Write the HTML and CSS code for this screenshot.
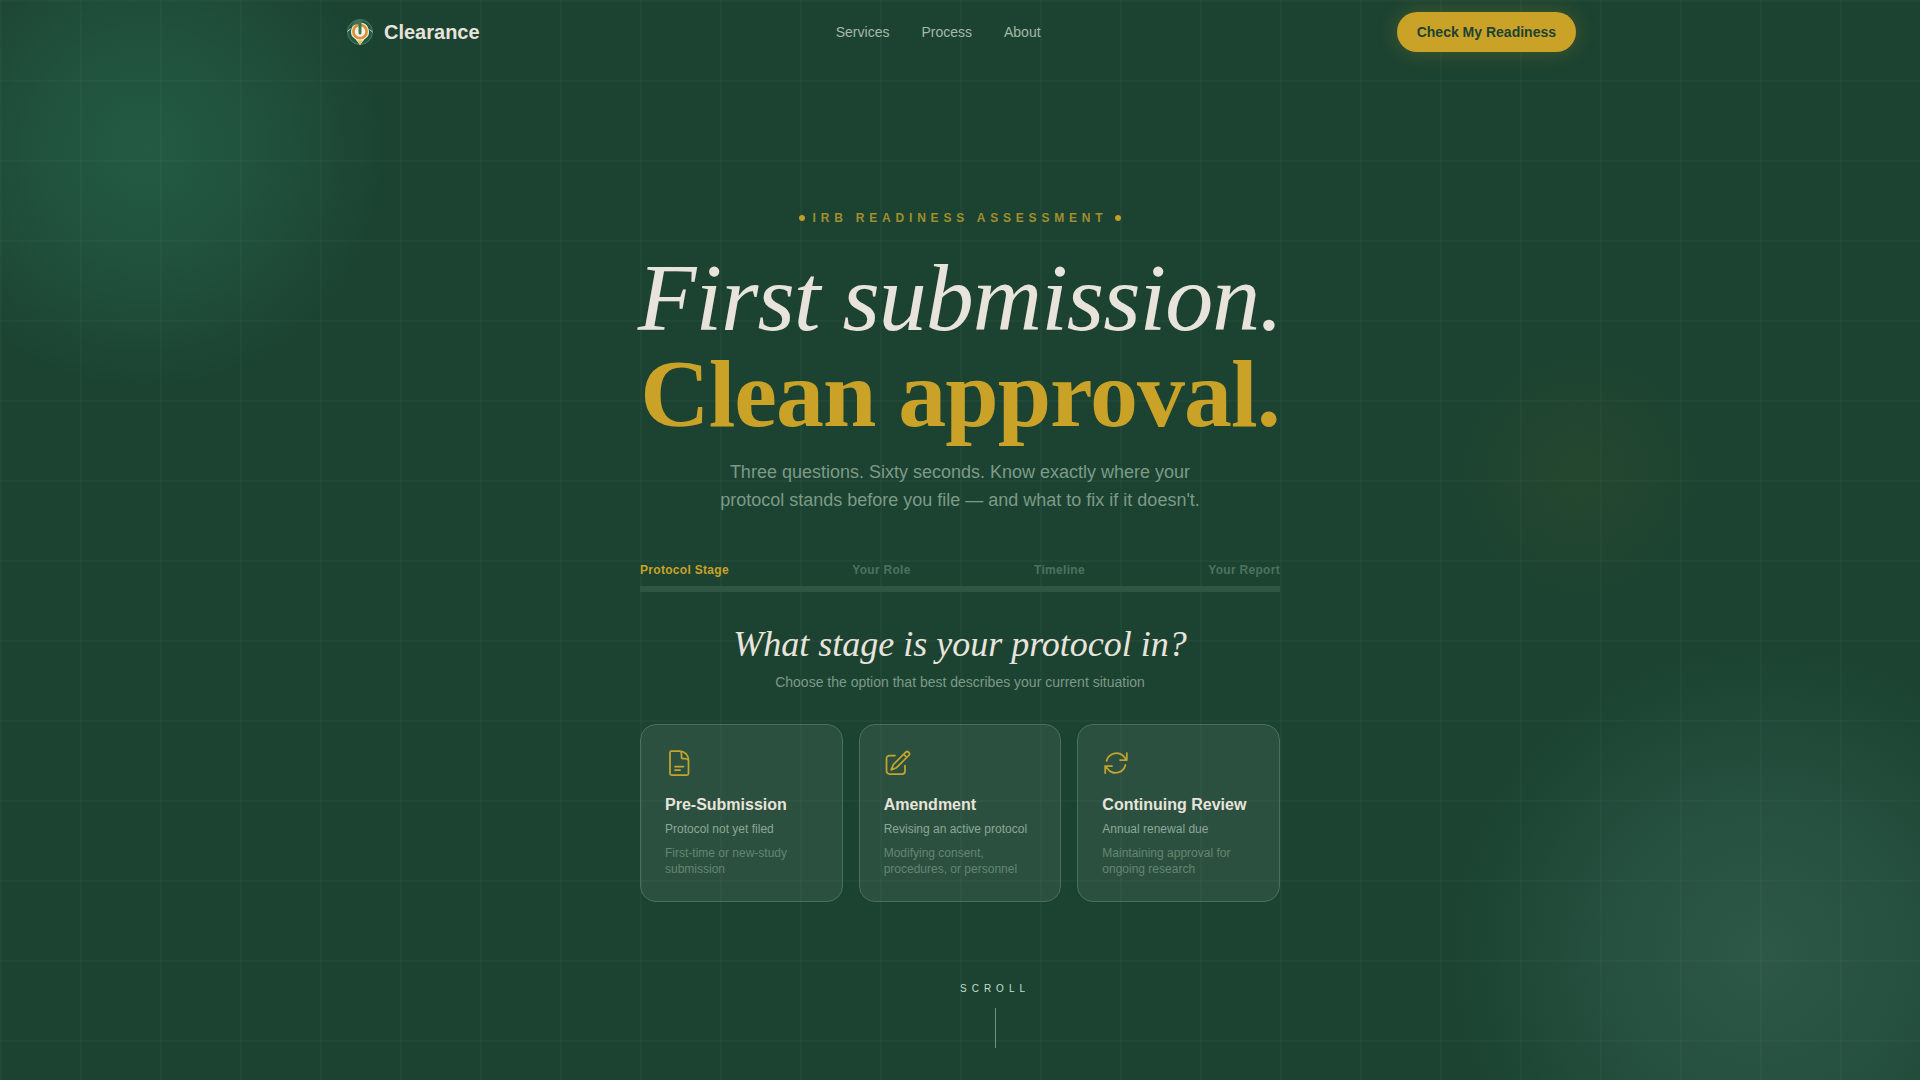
FILE: index.html
```html
<!DOCTYPE html>
<html lang="en">
<head>
<meta charset="utf-8">
<meta name="viewport" content="width=device-width, initial-scale=1">
<title>Clearance</title>
<link rel="stylesheet" href="styles.css">
</head>
<body>
<div class="page">
  <header class="nav">
    <a class="brand" href="#">
      <svg class="brand-mark" viewBox="-2 -2 32 32" aria-hidden="true">
        <circle cx="14" cy="14" r="12.500" fill="#1f5a42" stroke="#6f9a80" stroke-width=".6"/>
        <path d="M14 4.500a9 9 0 0 0-4.500 16.800L14 27l4.500-5.700A9 9 0 0 0 14 4.500Z" fill="#f3ead0"/>
        <circle cx="14" cy="13.500" r="6.600" fill="#f8f3e6" stroke="#d8963c" stroke-width="2.800"/>
        <path d="M14 27l-2.600-4.500h5.200Z" fill="#e2bd5a"/>
        <path d="M5 8.500Q8 1.500 15.500 1.500v13.500a1.500 1.500 0 0 1-3 0V6Q9 6 5 8.500Z" fill="#3d7357"/>
        <path d="M1.500 13.500l3.200-2.700M26.500 14l-3-2.500" stroke="#cfd8bd" fill="none"/>
      </svg>
      <span>Clearance</span>
    </a>
    <nav class="links" aria-label="Main">
      <a href="#">Services</a>
      <a href="#">Process</a>
      <a href="#">About</a>
    </nav>
    <button class="cta" type="button">Check My Readiness</button>
  </header>

  <main class="hero">
    <p class="eyebrow"><span class="dot"></span><span>IRB READINESS ASSESSMENT</span><span class="dot"></span></p>
    <h1 class="headline"><em>First submission.</em><strong>Clean approval.</strong></h1>
    <p class="lede">Three questions. Sixty seconds. Know exactly where your protocol stands before you file — and what to fix if it doesn't.</p>

    <section class="quiz">
      <ol class="steps">
        <li class="current">Protocol Stage</li>
        <li>Your Role</li>
        <li>Timeline</li>
        <li>Your Report</li>
      </ol>
      <div class="track"></div>
      <h2 class="question">What stage is your protocol in?</h2>
      <p class="hint">Choose the option that best describes your current situation</p>
      <div class="cards">
        <button class="card" type="button">
          <svg class="icon" viewBox="0 0 28 28" aria-hidden="true"><path d="M14.500 2H6.500A1.500 1.500 0 0 0 5 3.500v21A1.500 1.500 0 0 0 6.500 26h15.500a1.500 1.500 0 0 0 1.500-1.500V11c0-5-4-9-9-9ZM14.500 2c1.200.5 2 1.500 2 3v3.500a1 1 0 0 0 1 1H20c1.800 0 3 .7 3.500 2M10 17.500h8.500M10 21.200h5"/></svg>
          <span class="title">Pre-Submission</span>
          <span class="sub">Protocol not yet filed</span>
          <span class="desc">First-time or new-study submission</span>
        </button>
        <button class="card" type="button">
          <svg class="icon" viewBox="0 0 28 28" aria-hidden="true"><path d="M11 6.500H5.500A3 3 0 0 0 2.500 9.500v12.500a3 3 0 0 0 3 3H18a3 3 0 0 0 3-3v-5.500M21.500 3.300a2.200 2.200 0 0 1 3.200 3.200L12.500 18.700l-5.300 2.200 2.200-5.400ZM19.600 5.200l3.200 3.200"/></svg>
          <span class="title">Amendment</span>
          <span class="sub">Revising an active protocol</span>
          <span class="desc">Modifying consent, procedures, or personnel</span>
        </button>
        <button class="card" type="button">
          <svg class="icon" viewBox="0 0 28 28" aria-hidden="true"><path d="M24.800 4v7h-6.800M3.200 24v-7h6.800M4.600 12A10 10 0 0 1 21.500 7.200l3.300 3.800M23.400 16A10 10 0 0 1 6.500 20.800L3.200 17"/></svg>
          <span class="title">Continuing Review</span>
          <span class="sub">Annual renewal due</span>
          <span class="desc">Maintaining approval for ongoing research</span>
        </button>
      </div>
    </section>
  </main>

  <div class="scroll"><span>SCROLL</span><i class="scroll-line"></i></div>
</div>
</body>
</html>
```
FILE: styles.css
```css
* { box-sizing: border-box; margin: 0; padding: 0; }

body {
  background: #1c4331;
  color: #e8e4dc;
  font-family: "Liberation Sans", Arial, sans-serif;
}

.page {
  position: relative;
  min-height: 100vh;
  display: flex;
  flex-direction: column;
  overflow: hidden;
  background:
    linear-gradient(#ffffff06 2px, transparent 2px) 0 0 / 80px 80px,
    linear-gradient(90deg, #ffffff06 2px, transparent 2px) 0 0 / 80px 80px,
    radial-gradient(circle at 145px 150px, #235a43, #20513c 120px, #1c433100 240px),
    radial-gradient(circle at calc(100% - 160px) calc(100% - 125px), #2d5746, #254f3e 160px, #1c433100 310px),
    radial-gradient(circle at calc(100% - 340px) 475px, #25472f, #1c433100 120px),
    #1c4331;
}

.nav {
  width: 100%;
  max-width: 1280px;
  margin: 0 auto;
  padding: 12px 24px;
  display: flex;
  align-items: center;
  justify-content: space-between;
}

a { color: inherit; text-decoration: none; }
button { font: inherit; color: inherit; cursor: pointer; }

.brand {
  display: flex;
  align-items: center;
  gap: 8px;
  font-size: 20px;
  font-weight: 700;
}
.brand-mark { width: 32px; height: 32px; }

.links { display: flex; gap: 32px; font-size: 14px; color: #a4b9aa; }

.cta {
  height: 40px;
  padding: 0 20px;
  border: 0;
  border-radius: 20px;
  background: #c9a227;
  color: #1c4331;
  font-size: 14px;
  font-weight: 700;
  box-shadow: 0 0 20px #c9a22740;
}

.hero {
  display: flex;
  flex-direction: column;
  align-items: center;
  padding: 146px 24px 0;
  text-align: center;
}

.eyebrow {
  display: flex;
  align-items: center;
  gap: 8px;
  font-size: 12px;
  line-height: 16px;
  font-weight: 700;
  letter-spacing: 0.4em;
  color: #a08f2b;
}
.dot { width: 6px; height: 6px; border-radius: 50%; background: #c09d28; }

.headline {
  margin-top: 24px;
  font-family: "Liberation Serif", "Times New Roman", serif;
  font-size: 96px;
  line-height: 96px;
  letter-spacing: -1px;
}
.headline em, .headline strong { display: block; }
.headline em { font-weight: 400; }
.headline strong { color: #c9a227; }

.lede {
  max-width: 512px;
  margin-top: 16px;
  font-size: 18px;
  line-height: 28px;
  color: #7d9a88;
}

.quiz { width: 100%; max-width: 640px; margin-top: 48px; }

.steps {
  display: flex;
  justify-content: space-between;
  list-style: none;
  font-size: 12px;
  line-height: 16px;
  font-weight: 700;
  letter-spacing: 0.025em;
  color: #4c725f;
}
.steps .current { color: #c9a227; }

.track { height: 6px; margin-top: 8px; background: #2f5642; }

.question {
  margin-top: 32px;
  font-family: "Liberation Serif", "Times New Roman", serif;
  font-size: 36px;
  line-height: 40px;
  font-weight: 400;
  font-style: italic;
}

.hint { margin-top: 8px; font-size: 14px; line-height: 20px; color: #7d9a88; }

.cards {
  display: grid;
  grid-template-columns: repeat(3, 1fr);
  gap: 16px;
  margin-top: 32px;
}

.card {
  display: flex;
  flex-direction: column;
  align-items: flex-start;
  padding: 24px;
  border: 1px solid #4a6f5c;
  border-radius: 16px;
  background: #ffffff12;
  text-align: left;
  font-size: 12px;
  line-height: 16px;
}
.icon {
  width: 28px;
  height: 28px;
  fill: none;
  stroke: #c4a32f;
  stroke-width: 1.75;
  stroke-linecap: round;
  stroke-linejoin: round;
}
.title { margin-top: 16px; font-size: 16px; line-height: 24px; font-weight: 700; }
.sub { margin-top: 4px; color: #8ba796; }
.desc { margin-top: 8px; color: #648572; }

.scroll {
  position: absolute;
  left: 50%;
  bottom: 32px;
  display: flex;
  flex-direction: column;
  align-items: center;
  gap: 12px;
  font-size: 10px;
  line-height: 14px;
  letter-spacing: 5px;
  color: #c3dfcc;
}
.scroll-line { width: 1px; height: 40px; background: #6e9480; }
```
